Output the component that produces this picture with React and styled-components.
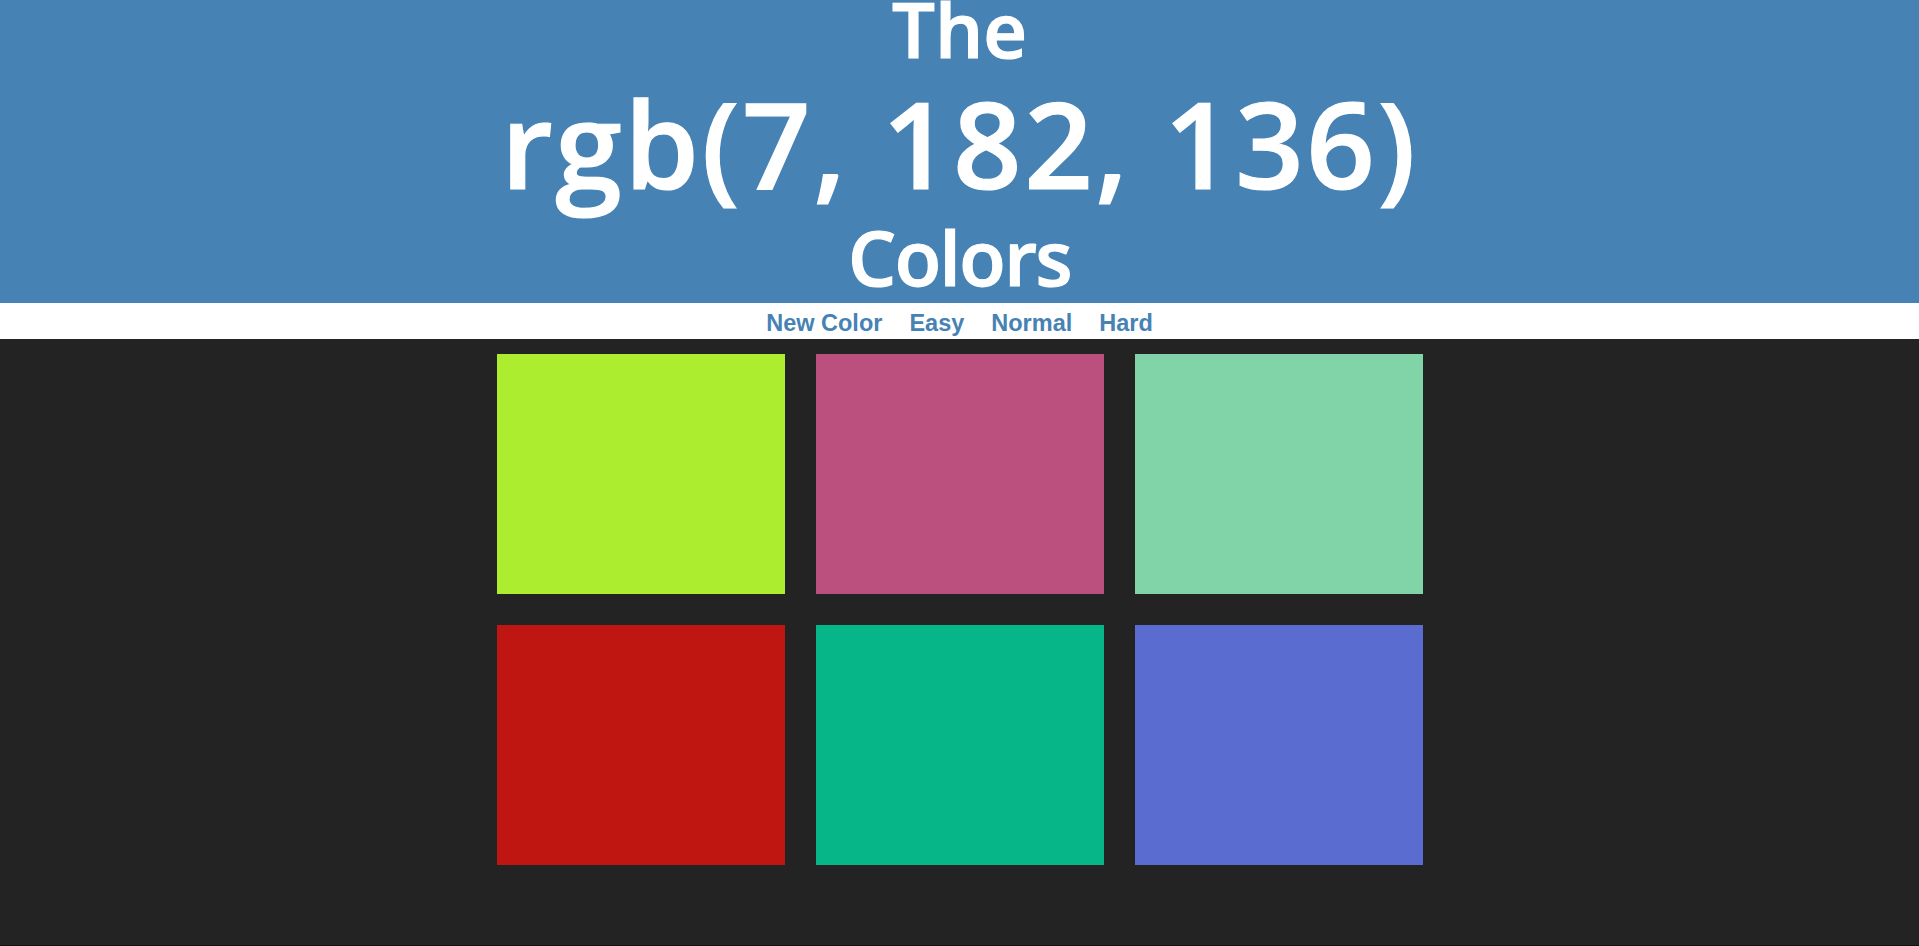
import React from "react";
import styled, { createGlobalStyle } from "styled-components";

const GlobalStyle = createGlobalStyle`
  html, body {
    margin: 0;
    padding: 0;
    background: #232323;
  }
  #root {
    min-height: 100vh;
    display: flex;
    flex-direction: column;
  }
`;

const Page = styled.div`
  flex: 1;
  display: flex;
  flex-direction: column;
  min-height: 100vh;
`;

const Title = styled.h1`
  margin: 0;
  padding: 0 0 18px;
  background: #4682b4;
  color: #ffffff;
  text-align: center;
  font-family: "Open Sans", "Noto Sans", sans-serif;
  font-weight: 600;
  -webkit-text-stroke: 1.2px #ffffff;
`;

const TitleLine = styled.span`
  display: block;
  font-size: ${(p) => (p.$big ? "120px" : "76px")};
  line-height: ${(p) => (p.$big ? "171px" : "57px")};
  letter-spacing: ${(p) => p.$spacing || "0"};
`;

const Stripe = styled.nav`
  height: 36px;
  background: #ffffff;
  display: flex;
  justify-content: center;
  gap: 27px;
`;

const NavButton = styled.button`
  border: none;
  background: none;
  margin: 0;
  padding: 4px 0 0;
  height: 36px;
  line-height: 32px;
  font-family: "Liberation Sans", Arial, sans-serif;
  font-size: 23.5px;
  font-weight: 700;
  color: #4682b4;
  cursor: pointer;
`;

const Board = styled.main`
  flex: 1;
  background: #232323;
  border-bottom: 1px solid #111111;
  padding-top: 15px;
  display: flex;
  justify-content: center;
  align-items: flex-start;
`;

const Grid = styled.div`
  display: grid;
  grid-template-columns: repeat(3, 288px);
  grid-auto-rows: 240px;
  gap: 31px;
`;

const Square = styled.div`
  background: ${(p) => p.$color};
`;

const colors = [
  "rgb(172, 238, 47)",
  "rgb(187, 80, 127)",
  "rgb(128, 212, 168)",
  "rgb(192, 22, 18)",
  "rgb(7, 182, 136)",
  "rgb(90, 108, 208)",
];

export default function App() {
  return (
    <>
      <GlobalStyle />
      <Page>
        <Title>
          <TitleLine>The</TitleLine>
          <TitleLine $big $spacing="2.5px">rgb(7, 182, 136)</TitleLine>
          <TitleLine $spacing="-1.5px">Colors</TitleLine>
        </Title>
        <Stripe>
          <NavButton>New Color</NavButton>
          <NavButton>Easy</NavButton>
          <NavButton>Normal</NavButton>
          <NavButton>Hard</NavButton>
        </Stripe>
        <Board>
          <Grid>
            {colors.map((c) => (
              <Square key={c} $color={c} />
            ))}
          </Grid>
        </Board>
      </Page>
    </>
  );
}
